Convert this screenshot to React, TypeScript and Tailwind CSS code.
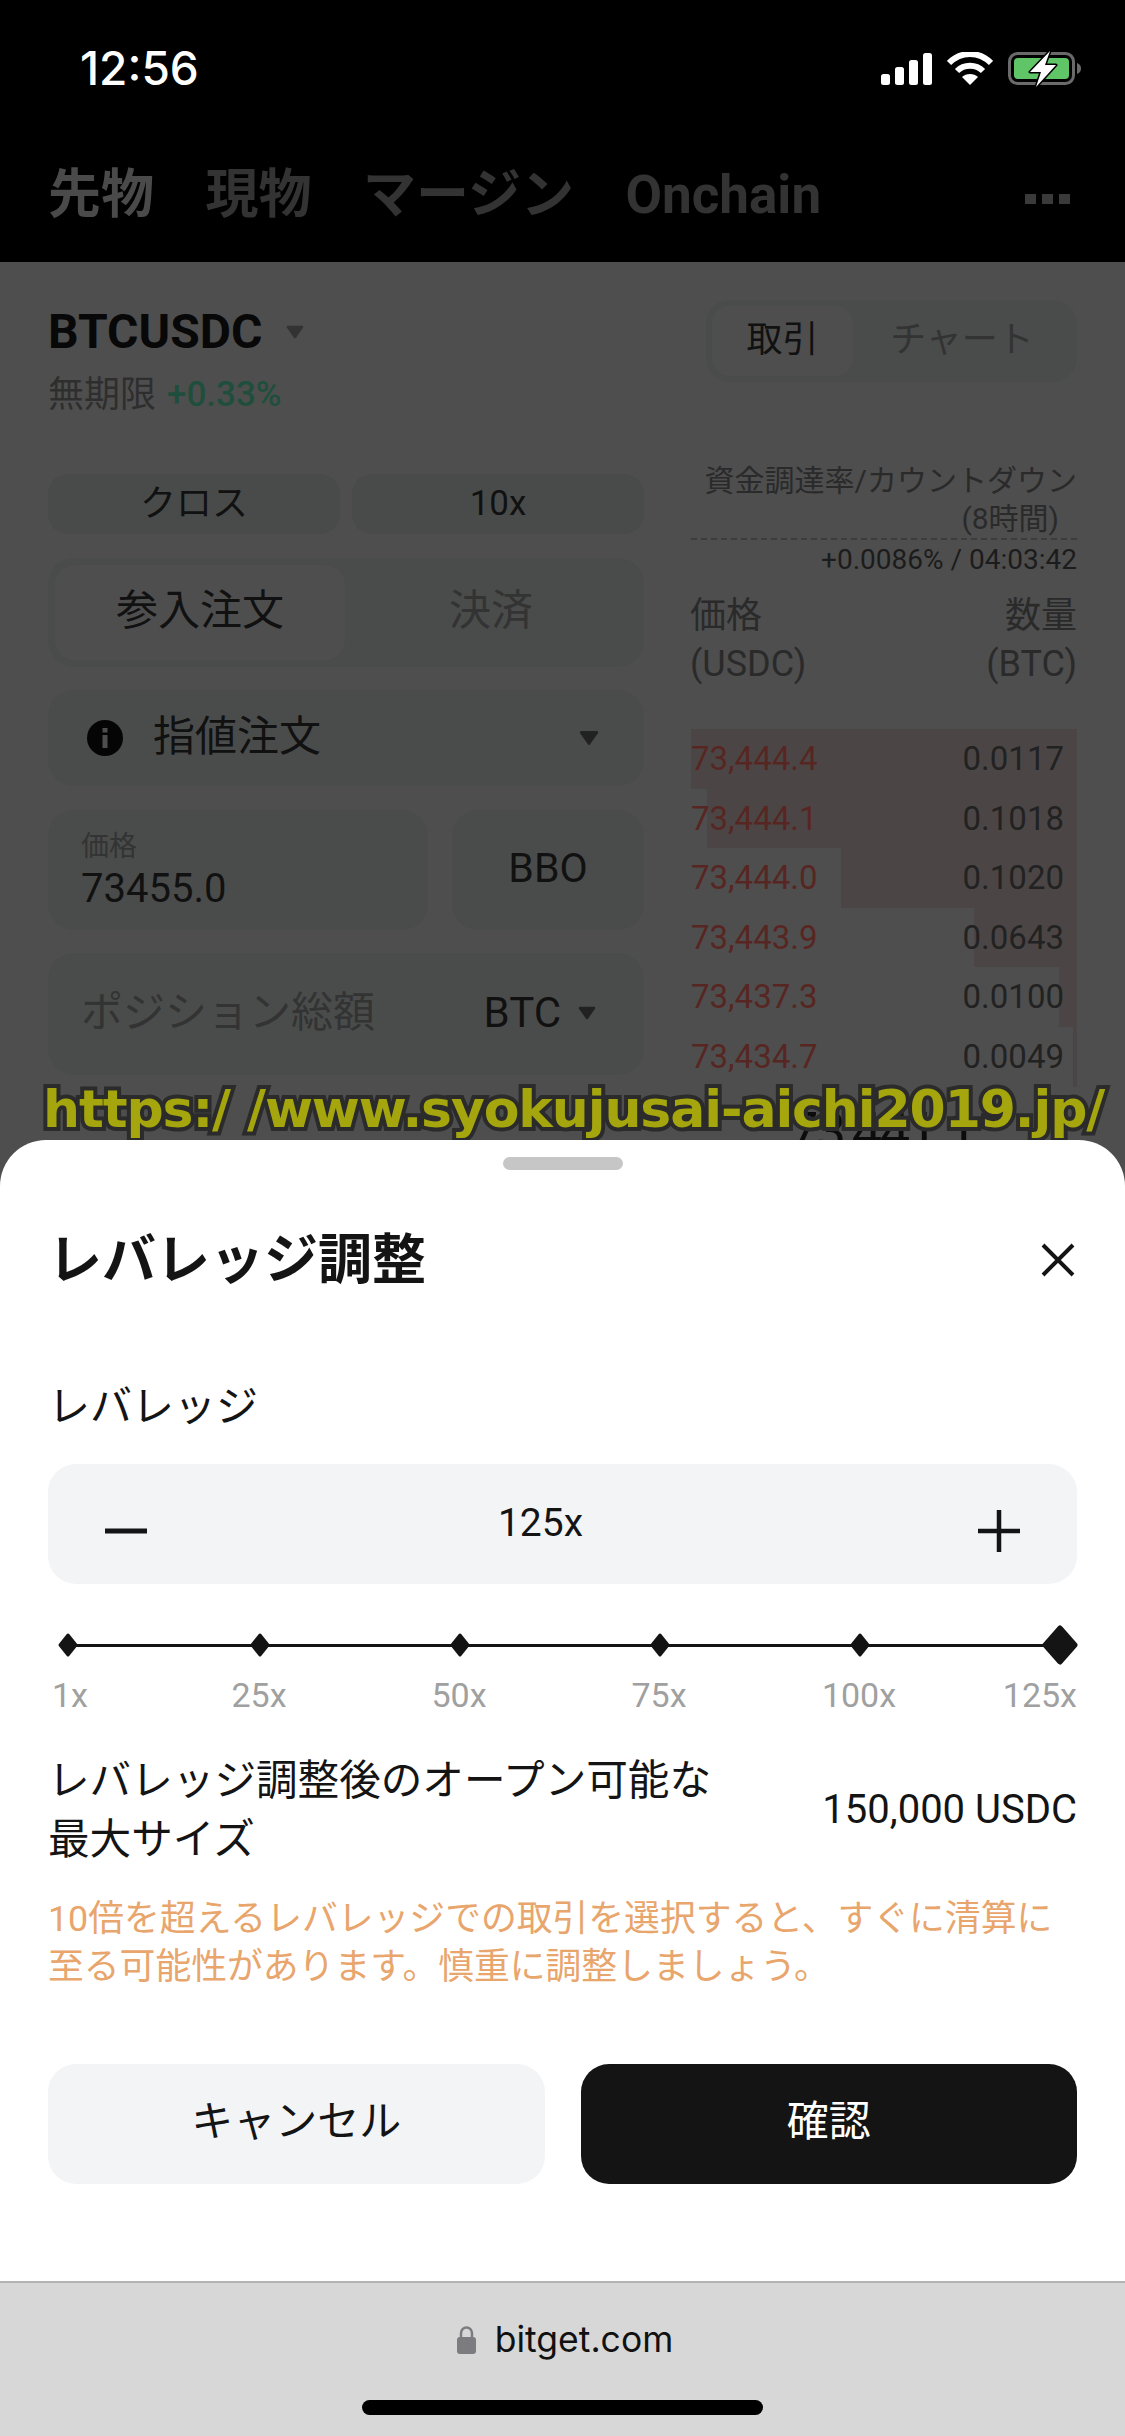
import React from "react";

const font = { fontFamily: 'Roboto, "Noto Sans CJK JP", sans-serif' };

function Tri({ w = 18, h = 14, color = "#111" }: { w?: number; h?: number; color?: string }) {
  return (
    <svg width={w} height={h} viewBox="0 0 18 14" className="shrink-0">
      <path d="M2 2 H16 L9 12 Z" fill={color} stroke={color} strokeWidth="2.5" strokeLinejoin="round" />
    </svg>
  );
}

function Diamond({ big }: { big?: boolean }) {
  return big ? (
    <svg width="36" height="40" viewBox="0 0 36 40">
      <path d="M18 3 L33 20 L18 37 L3 20 Z" fill="#141414" stroke="#141414" strokeWidth="5" strokeLinejoin="round" />
    </svg>
  ) : (
    <svg width="22" height="26" viewBox="0 0 22 26">
      <path d="M11 3 L19 13 L11 23 L3 13 Z" fill="#141414" stroke="#141414" strokeWidth="3" strokeLinejoin="round" />
    </svg>
  );
}

const rows = [
  ["73,444.4", "0.0117", 690],
  ["73,444.1", "0.1018", 706],
  ["73,444.0", "0.1020", 840],
  ["73,443.9", "0.0643", 973],
  ["73,437.3", "0.0100", 1058],
  ["73,434.7", "0.0049", 1072],
] as const;

export default function App() {
  return (
    <div className="relative w-[1125px] h-[2436px] overflow-hidden bg-[#4e4e4e]" style={font}>
      {/* top black header */}
      <div className="bg-black h-[262px] flex flex-col">
        <div className="h-[137px] flex justify-between items-center pl-[80px] pr-[43px]">
          <span className="text-white text-[46px] font-medium" style={{ fontFamily: 'Inter, sans-serif' }}>12:56</span>
          <div className="flex items-center gap-[15px]">
            <svg width="51" height="32" viewBox="0 0 51 32">
              <rect x="0" y="21" width="9" height="11" rx="2.5" fill="#fff" />
              <rect x="14" y="14" width="9" height="18" rx="2.5" fill="#fff" />
              <rect x="28" y="7" width="9" height="25" rx="2.5" fill="#fff" />
              <rect x="42" y="0" width="9" height="32" rx="2.5" fill="#fff" />
            </svg>
            <svg width="46" height="34" viewBox="0 0 46 34">
              <path d="M2 11 C14 -1 32 -1 44 11" fill="none" stroke="#fff" strokeWidth="6" />
              <path d="M10 19 C17 12 29 12 36 19" fill="none" stroke="#fff" strokeWidth="6" />
              <path d="M23 33 L15 25 C19 21 27 21 31 25 Z" fill="#fff" />
            </svg>
            <svg width="74" height="38" viewBox="0 0 74 38">
              <rect x="1.5" y="3.5" width="64" height="30" rx="8" fill="none" stroke="#6a6a6a" strokeWidth="3" />
              <rect x="6" y="8" width="55" height="21" rx="4" fill="#5fc566" />
              <path d="M69 13 C72 14 73 16 73 18.5 C73 21 72 23 69 24 Z" fill="#6a6a6a" />
              <path d="M42 1 L22 22 H33 L28 37 L48 15 H37 Z" fill="#fff" stroke="#000" strokeWidth="3" strokeLinejoin="round" paintOrder="stroke" />
            </svg>
          </div>
        </div>
        <div className="flex items-center h-[116px] pl-[48px] pr-[55px] pt-[2px] text-[#333333] font-bold text-[53px]">
          <span className="text-[#4a4a4a] mr-[51.5px]">先物</span>
          <span className="mr-[51.5px]">現物</span>
          <span className="mr-[51.5px]">マージン</span>
          <span>Onchain</span>
          <div className="ml-auto flex gap-[6px] mt-[6px]">
            <div className="w-[11px] h-[10px] bg-[#3a3a3a]" />
            <div className="w-[11px] h-[10px] bg-[#3a3a3a]" />
            <div className="w-[11px] h-[10px] bg-[#3a3a3a]" />
          </div>
        </div>
      </div>

      {/* dimmed page */}
      <div className="px-[48px]">
        <div className="flex justify-between h-[212px] pt-[38px]">
          <div className="flex flex-col">
            <div className="flex items-center h-[64px] gap-[24px] text-[#080808] text-[48px] font-bold">
              BTCUSDC
              <Tri color="#333" />
            </div>
            <div className="flex items-center h-[62px] text-[36px] text-[#2e2e2e] gap-[11px]">
              <span>無期限</span>
              <span className="text-[35px] text-[#1f4f3c] font-medium">+0.33%</span>
            </div>
          </div>
          <div className="w-[371px] h-[82px] rounded-[24px] bg-[#4a4c4b] p-[6px] flex items-stretch text-[36px]">
            <div className="w-[141px] rounded-[18px] bg-[#4e4e4e] flex items-center justify-center text-[#111] pb-[3px]">取引</div>
            <div className="flex-1 flex items-center justify-center text-[#333] pb-[3px]">チャート</div>
          </div>
        </div>

        <div className="flex justify-between">
          <div className="w-[596px] flex flex-col">
            <div className="flex gap-[12px] h-[60px]">
              <div className="flex-1 rounded-[20px] bg-[#494b4a] flex items-center justify-center text-[36px] text-[#111]">クロス</div>
              <div className="flex-1 rounded-[20px] bg-[#494b4a] flex items-center justify-center text-[35px] text-[#111]">10x</div>
            </div>
            <div className="mt-[24px] h-[109px] rounded-[26px] bg-[#4a4c4b] p-[7px] flex text-[42px]">
              <div className="w-[290px] rounded-[20px] bg-[#4e4e4e] flex items-center justify-center text-[#111] pb-[5px]">参入注文</div>
              <div className="flex-1 flex items-center justify-center text-[#333] pb-[5px]">決済</div>
            </div>
            <div className="mt-[23px] h-[96px] rounded-[26px] bg-[#4a4c4b] flex items-center pl-[39px] pr-[45px] text-[42px] text-[#111]">
              <svg width="36" height="36" viewBox="0 0 36 36" className="shrink-0">
                <circle cx="18" cy="18" r="18" fill="#050505" />
                <rect x="15.5" y="15" width="5" height="13" fill="#4e4e4e" />
                <rect x="15.5" y="8" width="5" height="4.5" fill="#4e4e4e" />
              </svg>
              <span className="ml-[30px] pb-[4px]">指値注文</span>
              <span className="ml-auto"><Tri w={20} h={16} color="#222" /></span>
            </div>
            <div className="mt-[24px] flex gap-[24px] h-[120px]">
              <div className="w-[380px] rounded-[26px] bg-[#4a4c4b] pl-[33px] flex flex-col justify-center pt-[2px]">
                <span className="text-[28px] leading-[36px] text-[#333]">価格</span>
                <span className="text-[40px] leading-[48px] text-[#111]">73455.0</span>
              </div>
              <div className="flex-1 rounded-[26px] bg-[#4a4c4b] flex items-center justify-center text-[41px] text-[#111] pb-[2px]">BBO</div>
            </div>
            <div className="mt-[23px] h-[122px] rounded-[26px] bg-[#4a4c4b] flex items-center pl-[33px] pr-[48px] pb-[3px]">
              <span className="text-[42px] text-[#333]">ポジション総額</span>
              <span className="ml-auto text-[42px] text-[#111]">BTC</span>
              <span className="ml-[17px]"><Tri w={18} h={14} color="#222" /></span>
            </div>
          </div>

          <div className="w-[386px] -mt-[12px] text-[#2a2a2a]">
            <div className="text-right text-[30px] leading-[38px]">資金調達率/カウントダウン</div>
            <div className="text-right text-[30px] leading-[37px] pr-[18px]">(8時間)</div>
            <div className="border-b-2 border-dashed border-[#3c3c3c] h-[2px] mt-[1px]" />
            <div className="text-right text-[28px] leading-[38px] text-[#1c1c1c] mt-[1px]">+0.0086% / 04:03:42</div>
            <div className="flex justify-between text-[36px] leading-[48px] mt-[13px] -ml-[1px]">
              <div>
                <div>価格</div>
                <div>(USDC)</div>
              </div>
              <div className="text-right">
                <div>数量</div>
                <div>(BTC)</div>
              </div>
            </div>
            <div className="mt-[41px] flex flex-col">
              {rows.map(([p, q, left]) => (
                <div key={p} className="relative h-[59.6px] flex items-center justify-between pr-[13px] text-[33px]">
                  <div className="absolute inset-y-0 right-0 bg-[#4b4645]" style={{ left: left - 690 }} />
                  <span className="relative text-[#582622]">{p}</span>
                  <span className="relative text-[#222222]">{q}</span>
                </div>
              ))}
            </div>
          </div>
        </div>
      </div>

      {/* mid price peeking under the sheet */}
      <div className="absolute left-[788px] top-[1092px] text-[54px] leading-[80px] tracking-[-2.5px] text-[#0c0c0c]">73,441.1</div>

      {/* watermark */}
      <div
        className="absolute left-[43px] top-[1076px] whitespace-nowrap text-[52px] leading-[66px] tracking-[-1.1px] font-bold text-[#a5a50e] z-10 [-webkit-text-stroke:8px_#2b2b2b] [paint-order:stroke_fill]"
        style={{ fontFamily: '"DejaVu Sans", sans-serif' }}
      >
        https:/ /www.syokujusai-aichi2019.jp/
      </div>

      {/* bottom sheet */}
      <div className="absolute left-0 right-0 bottom-0 h-[1296px] z-20 flex flex-col">
        <div className="h-[1141px] bg-white rounded-t-[46px] flex flex-col px-[48px] text-[#141414]">
          <div className="mt-[17px] mx-auto w-[120px] h-[13px] rounded-full bg-[#c6c6c6] shrink-0" />
          <div className="mt-[54px] flex items-center justify-between h-[72px] pr-[2px]">
            <span className="text-[54px] font-bold">レバレッジ調整</span>
            <svg width="34" height="34" viewBox="0 0 34 34">
              <path d="M2 2 L32 32 M32 2 L2 32" stroke="#141414" strokeWidth="4" fill="none" />
            </svg>
          </div>
          <div className="mt-[82px] mb-[1px] h-[56px] flex items-center text-[42px]">レバレッジ</div>
          <div className="mt-[29px] h-[120px] rounded-[28px] bg-[#f3f4f6] flex items-center justify-between pl-[57px] pr-[57px]">
            <svg width="42" height="6" viewBox="0 0 42 6" className="mt-[14px]"><rect width="42" height="5" y="0.5" fill="#141414" /></svg>
            <span className="text-[39px] -mt-[2px] -ml-[44px]">125x</span>
            <svg width="42" height="42" viewBox="0 0 42 42" className="mt-[14px]"><path d="M0 21 H42 M21 0 V42" stroke="#141414" strokeWidth="4.5" fill="none" /></svg>
          </div>

          <div className="relative mt-[37px] h-[48px] flex items-center">
            <div className="absolute left-[18px] right-[18px] top-[23px] h-[3px] bg-[#141414]" />
            <div className="relative w-[112px] pl-[9px]"><Diamond /></div>
            <div className="relative w-[200px] flex justify-center"><Diamond /></div>
            <div className="relative w-[200px] flex justify-center"><Diamond /></div>
            <div className="relative w-[200px] flex justify-center"><Diamond /></div>
            <div className="relative w-[200px] flex justify-center"><Diamond /></div>
            <div className="relative flex-1 flex justify-end -mr-[1px]"><Diamond big /></div>
          </div>
          <div className="mt-[6px] h-[40px] flex items-center text-[34px] text-[#a0a0a0]">
            <div className="w-[112px] pl-[4px]">1x</div>
            <div className="w-[200px] text-center -ml-[1px]">25x</div>
            <div className="w-[200px] text-center">50x</div>
            <div className="w-[200px] text-center">75x</div>
            <div className="w-[200px] text-center">100x</div>
            <div className="flex-1 text-right">125x</div>
          </div>

          <div className="mt-[36px] flex items-center justify-between">
            <div className="w-[700px] text-[41.6px] leading-[59px] whitespace-nowrap">
              レバレッジ調整後のオープン可能な
              <br />
              最大サイズ
            </div>
            <div className="text-[40px] whitespace-nowrap">150,000 USDC</div>
          </div>

          <div className="mt-[26px] text-[35.8px] leading-[48px] text-[#e8a56c] whitespace-nowrap">
            10倍を超えるレバレッジでの取引を選択すると、すぐに清算に
            <br />
            至る可能性があります。慎重に調整しましょう。
          </div>

          <div className="mt-[73px] flex gap-[36px] h-[120px]">
            <div className="flex-1 rounded-[28px] bg-[#f3f4f6] flex items-center justify-center text-[42px] pb-[6px]">キャンセル</div>
            <div className="flex-1 rounded-[28px] bg-[#141414] flex items-center justify-center text-[42px] text-white pb-[6px]">確認</div>
          </div>
        </div>

        <div className="flex-1 bg-[#d7d7d7] border-t-2 border-[#b3b3b3] flex flex-col items-center">
          <div className="mt-[35px] ml-[5px] flex items-center gap-[19px] h-[44px] text-[#111]">
            <svg width="19" height="28" viewBox="0 0 19 28">
              <path d="M4 12 V7 A5.5 5.5 0 0 1 15 7 V12" fill="none" stroke="#7c7c80" strokeWidth="2.5" />
              <rect x="0" y="11" width="19" height="17" rx="3" fill="#7c7c80" />
            </svg>
            <span className="text-[35.5px]" style={{ fontFamily: 'Inter, sans-serif' }}>bitget.com</span>
          </div>
          <div className="mt-[38px] w-[401px] h-[15px] rounded-full bg-black" />
        </div>
      </div>
    </div>
  );
}
